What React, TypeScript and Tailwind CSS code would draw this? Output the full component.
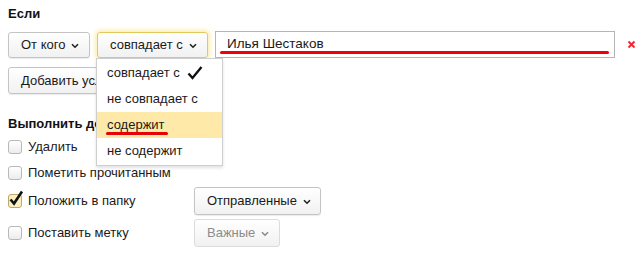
import type { ReactNode } from 'react'

function Chevron({ muted = false }: { muted?: boolean }) {
  return (
    <svg width="8" height="6" viewBox="0 0 8 6" className="ml-[6px] mt-[2px] shrink-0">
      <path d="M1 1.2L4 4.2L7 1.2" fill="none" stroke={muted ? '#8a8a8a' : '#222'} strokeWidth="1.6" />
    </svg>
  )
}

function Button({
  children,
  chevron = true,
  muted = false,
  focused = false,
  className = '',
}: {
  children: ReactNode
  chevron?: boolean
  muted?: boolean
  focused?: boolean
  className?: string
}) {
  return (
    <div
      className={
        'flex shrink-0 items-center whitespace-nowrap rounded-[3px] border bg-gradient-to-b from-white to-[#f1f1f1] px-[12px] text-[13px] ' +
        (focused
          ? 'border-[#e2c95a] shadow-[0_0_4px_2px_#fbeeb0] '
          : muted
          ? 'border-[#dcdcdc] '
          : 'border-[#c4c4c4] shadow-[0_1px_1px_rgba(0,0,0,0.08)] ') +
        (muted ? 'text-[#8c8c8c] ' : 'text-[#1a1a1a] ') +
        className
      }
    >
      <span>{children}</span>
      {chevron && <Chevron muted={muted} />}
    </div>
  )
}

function Checkbox({ checked = false }: { checked?: boolean }) {
  return (
    <div
      className={
        'relative h-[14px] w-[14px] shrink-0 rounded-[3px] border ' +
        (checked ? 'border-[#b9a96a] bg-[#fcf0c2]' : 'border-[#b8b8b8] bg-gradient-to-b from-white to-[#ececec]')
      }
    >
      {checked && (
        <svg width="16" height="16" viewBox="0 0 16 16" className="absolute left-[-1px] top-[-5px]">
          <path d="M2.5 9.5L6 13.5L14 1.5" fill="none" stroke="#111" strokeWidth="2.6" />
        </svg>
      )}
    </div>
  )
}

function ActionRow({ label, checked = false, children, h }: { label: string; checked?: boolean; children?: ReactNode; h: string }) {
  return (
    <div className={'flex items-center ' + h}>
      <div className="flex w-[186px] items-center gap-[6px]">
        <Checkbox checked={checked} />
        <span className="whitespace-nowrap text-[13px] text-[#1a1a1a]">{label}</span>
      </div>
      {children}
    </div>
  )
}

const options = ['совпадает с', 'не совпадает с', 'содержит', 'не содержит']

export default function App() {
  return (
    <div
      className="relative h-[253px] w-[641px] overflow-hidden bg-white pl-[8px] pt-[6px]"
      style={{ fontFamily: '"Liberation Sans", Arial, sans-serif' }}
    >
      <div className="text-[13px] font-bold leading-[16px] text-[#111]">Если</div>

      <div className="mt-[9px] flex items-center">
        <Button className="h-[26px] w-[82px]">От кого</Button>
        <div className="relative ml-[7px] shrink-0">
          <Button focused className="h-[26px] w-[111px]">
            совпадает с
          </Button>
          <div className="absolute left-[-1px] top-[26px] z-10 w-[127px] border border-[#cfcfcf] bg-white py-[1px] shadow-[0_2px_3px_rgba(0,0,0,0.12)]">
            {options.map((o, i) => (
              <div
                key={o}
                className={
                  'flex h-[26px] items-center whitespace-nowrap pl-[10px] text-[13px] text-[#1a1a1a] ' +
                  (i === 2 ? 'bg-[#fee9a8]' : '')
                }
              >
                <span className="relative">
                  {o}
                  {i === 2 && <span className="absolute left-[-1px] right-[-3px] top-[17px] h-[3px] rounded-full bg-[#e6000a]" />}
                </span>
                {i === 0 && (
                  <svg width="16" height="14" viewBox="0 0 16 14" className="ml-[7px]">
                    <path d="M1.5 7.5L5.5 12L14.5 1" fill="none" stroke="#111" strokeWidth="2.4" />
                  </svg>
                )}
              </div>
            ))}
          </div>
        </div>
        <div className="relative ml-[7px] flex h-[27px] w-[400px] shrink-0 items-center whitespace-nowrap border border-[#b5b5b5] bg-white pl-[11px] text-[13.5px] text-[#1a1a1a]">
          Илья Шестаков
          <span className="absolute bottom-[3px] left-[4px] right-[5px] h-[3px] rounded-full bg-[#f20008]" />
        </div>
        <svg width="9" height="9" viewBox="0 0 9 9" className="ml-[12px] shrink-0">
          <path d="M1.5 1.5L7.5 7.5M7.5 1.5L1.5 7.5" stroke="#f0232e" strokeWidth="1.8" />
        </svg>
      </div>

      {/* the rest of this button sits under the open menu */}
      <Button chevron={false} className="mt-[9px] h-[27px] w-[90px] overflow-hidden">
        Добавить условие
      </Button>

      <div className="mt-[22px] w-[88px] overflow-hidden whitespace-nowrap text-[13px] font-bold leading-[16px] text-[#111]">
        Выполнить действие
      </div>

      <div className="mt-[2px] flex flex-col">
        <ActionRow label="Удалить" h="h-[26px]" />
        <ActionRow label="Пометить прочитанным" h="h-[26px]" />
        <ActionRow label="Положить в папку" checked h="h-[30px]">
          <Button className="h-[28px] w-[127px]">Отправленные</Button>
        </ActionRow>
        <div className="h-[2px]" />
        <ActionRow label="Поставить метку" h="h-[30px]">
          <Button muted className="h-[28px] w-[86px]">
            Важные
          </Button>
        </ActionRow>
      </div>
    </div>
  )
}
